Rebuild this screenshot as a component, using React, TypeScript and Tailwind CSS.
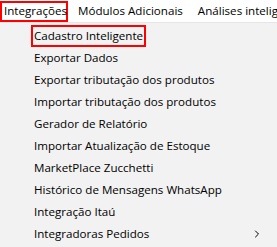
import { ChevronRight } from 'lucide-react';

const items = [
  'Exportar Dados',
  'Exportar tributação dos produtos',
  'Importar tributação dos produtos',
  'Gerador de Relatório',
  'Importar Atualização de Estoque',
  'MarketPlace Zucchetti',
  'Histórico de Mensagens WhatsApp',
  'Integração Itaú',
];

export default function App() {
  return (
    <div className="h-[247px] w-[277px] overflow-hidden whitespace-nowrap bg-[#f2f2f2] font-['Open_Sans',sans-serif] text-[11.6px] text-black">
      <div className="flex h-[23px] items-center border-b border-[#e5e5e5] bg-white">
        <div className="flex h-[21px] w-[68px] shrink-0 items-center border-2 border-[#ff0000] pl-[2px]">Integrações</div>
        <div className="ml-[10px] shrink-0">Módulos Adicionais</div>
        <div className="ml-[15px] shrink-0">Análises inteligentes</div>
      </div>
      <div className="ml-[31px] mt-[2px] flex h-[22px] w-[115px] items-center border-2 border-[#ff0000] pl-[1px]">
        Cadastro Inteligente
      </div>
      {items.map((item) => (
        <div key={item} className="flex h-[22px] items-center pl-[34px]">
          {item}
        </div>
      ))}
      <div className="flex h-[22px] items-center justify-between pl-[34px] pr-[14px]">
        Integradoras Pedidos
        <ChevronRight className="h-3 w-3" strokeWidth={2} />
      </div>
    </div>
  );
}
